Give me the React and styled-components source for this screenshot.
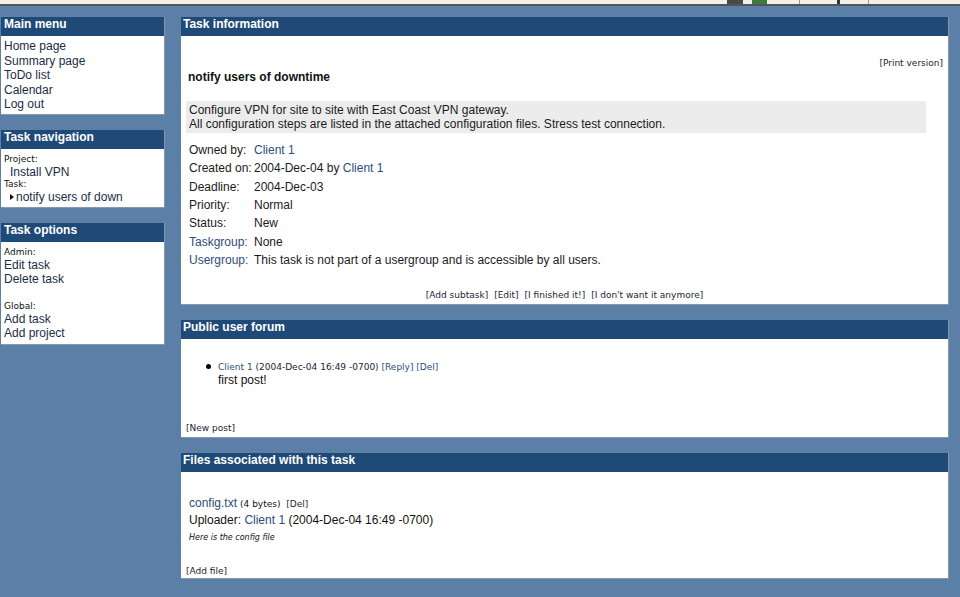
import React from 'react';
import styled, { createGlobalStyle } from 'styled-components';

const Global = createGlobalStyle`
  html, body { margin: 0; padding: 0; background: #5c7fa8; }
  body { font-family: "Liberation Sans", Arial, sans-serif; font-size: 12px; color: #1b1b1b; }
  a { text-decoration: none; color: inherit; }
`;

const Page = styled.div`
  min-height: 597px;
  background: #5c7fa8;
`;

const Chrome = styled.div`
  height: 4px;
  background: #f2efe6;
  border-bottom: 2px solid #50565c;
  display: flex;
  align-items: stretch;
  padding-left: 727px;
`;

const ChromeBit = styled.span`
  width: ${p => p.$w}px;
  margin-right: ${p => p.$gap}px;
  background: ${p => p.$c};
`;

const Layout = styled.div`
  display: flex;
  align-items: flex-start;
  gap: 16px;
  padding: 11px 11px 17px 1px;
`;

const Column = styled.div`
  width: ${p => p.$w}px;
  display: flex;
  flex-direction: column;
  gap: ${p => p.$gap}px;
`;

const Panel = styled.section`
  background: #fff;
  border-bottom: 1px solid #8798ae;
  border-right: 1px solid #8798ae;
`;

const PanelHead = styled.h2`
  margin: 0;
  height: 19px;
  line-height: 19px;
  background: #1f4a77;
  color: #fff;
  font: bold 12px "Liberation Sans", Arial, sans-serif;
  padding-left: ${p => p.$pl || 3}px;
`;

const SideBody = styled.div`
  padding: ${p => p.$pt}px 3px ${p => p.$pb}px 3px;
  display: flex;
  flex-direction: column;
`;

const MenuLink = styled.a`
  display: block;
  line-height: ${p => p.$lh || 14}px;
  font-size: 12px;
  color: #1c2c46;
  padding-left: ${p => p.$indent || 0}px;
`;

const SmallLabel = styled.div`
  font: 9px "DejaVu Sans", Verdana, sans-serif;
  line-height: 11px;
  color: #111;
`;

const Spacer = styled.div`
  height: ${p => p.$h}px;
`;

const TaskCurrent = styled.div`
  display: flex;
  align-items: center;
  gap: 2px;
  padding-left: 6px;
  line-height: 14px;
  color: #1c2c46;
`;

const Arrow = () => (
  <svg width="4" height="6" viewBox="0 0 4 6"><path d="M0 0 L4 3 L0 6 Z" fill="#111" /></svg>
);

const MainBody = styled.div`
  padding: 0 5px ${p => p.$pb || 3}px 5px;
  display: flex;
  flex-direction: column;
`;

const Small = styled.span`
  font: 9px "DejaVu Sans", Verdana, sans-serif;
  color: ${p => p.$c || '#1b2436'};
`;

const PrintRow = styled.div`
  margin-top: 20px;
  line-height: 12px;
  text-align: right;
`;

const Title = styled.h1`
  margin: 2px 0 0 2px;
  font: bold 12px "Liberation Sans", Arial, sans-serif;
  line-height: 15px;
  color: #111;
`;

const Description = styled.div`
  margin: 16px 17px 0 0;
  padding: 2px 3px;
  background: #ececec;
  line-height: 14px;
  color: #1b1b1b;
`;

const InfoGrid = styled.div`
  margin-top: 8px;
  padding-left: 3px;
  display: grid;
  grid-template-columns: 65px 1fr;
  grid-auto-rows: 18.3px;
  align-items: center;
`;

const Label = styled.span`
  color: ${p => (p.$link ? '#2d4d7c' : '#1b1b1b')};
`;

const Value = styled.span`
  color: #1b1b1b;
`;

const Link = styled.a`
  color: #2d4d7c;
`;

const Actions = styled.div`
  margin-top: 21px;
  line-height: 12px;
  display: flex;
  justify-content: center;
  gap: 6px;
`;

const Post = styled.div`
  margin-top: 21px;
  padding-left: 20px;
  display: flex;
  gap: 7px;
`;

const Bullet = styled.span`
  width: 5px;
  height: 5px;
  border-radius: 50%;
  background: #000;
  margin-top: 4px;
  flex: none;
`;

const PostBody = styled.div`
  display: flex;
  flex-direction: column;
`;

const PostMeta = styled.div`
  line-height: 12px;
`;

const PostText = styled.div`
  margin-top: 1px;
  line-height: 15px;
  color: #111;
`;

const BottomLink = styled.div`
  margin-top: ${p => p.$mt}px;
  line-height: 12px;
`;

const FileLine = styled.div`
  margin-top: 23px;
  padding-left: 3px;
  line-height: 16px;
  display: flex;
  align-items: baseline;
  gap: 3px;
`;

const UploadLine = styled.div`
  padding-left: 3px;
  line-height: 18px;
  color: #111;
`;

const Comment = styled.div`
  padding-left: 3px;
  font: italic 8px "DejaVu Sans", Verdana, sans-serif;
  line-height: 18px;
  color: #111;
`;

export default function App() {
  return (
    <Page>
      <Global />
      <Chrome>
        <ChromeBit $w={16} $gap={9} $c="#4a4a44" />
        <ChromeBit $w={15} $gap={32} $c="#3f7a3a" />
        <ChromeBit $w={1} $gap={37} $c="#999" />
        <ChromeBit $w={3} $gap={28} $c="#334" />
        <ChromeBit $w={1} $gap={0} $c="#999" />
      </Chrome>
      <Layout>
        <Column $w={164} $gap={15}>
          <Panel>
            <PanelHead>Main menu</PanelHead>
            <SideBody $pt={3} $pb={2}>
              <MenuLink $lh={14.5}>Home page</MenuLink>
              <MenuLink $lh={14.5}>Summary page</MenuLink>
              <MenuLink $lh={14.5}>ToDo list</MenuLink>
              <MenuLink $lh={14.5}>Calendar</MenuLink>
              <MenuLink $lh={14.5}>Log out</MenuLink>
            </SideBody>
          </Panel>
          <Panel>
            <PanelHead>Task navigation</PanelHead>
            <SideBody $pt={5} $pb={3}>
              <SmallLabel>Project:</SmallLabel>
              <MenuLink $indent={6}>Install VPN</MenuLink>
              <SmallLabel>Task:</SmallLabel>
              <TaskCurrent><Arrow />notify users of down</TaskCurrent>
            </SideBody>
          </Panel>
          <Panel>
            <PanelHead>Task options</PanelHead>
            <SideBody $pt={5} $pb={4}>
              <SmallLabel>Admin:</SmallLabel>
              <MenuLink>Edit task</MenuLink>
              <MenuLink>Delete task</MenuLink>
              <Spacer $h={15} />
              <SmallLabel>Global:</SmallLabel>
              <MenuLink>Add task</MenuLink>
              <MenuLink>Add project</MenuLink>
            </SideBody>
          </Panel>
        </Column>
        <Column $w={768} $gap={15}>
          <Panel>
            <PanelHead $pl={2}>Task information</PanelHead>
            <MainBody $pb={4}>
              <PrintRow><Small>[Print version]</Small></PrintRow>
              <Title>notify users of downtime</Title>
              <Description>
                Configure VPN for site to site with East Coast VPN gateway.<br />
                All configuration steps are listed in the attached configuration files. Stress test connection.
              </Description>
              <InfoGrid>
                <Label>Owned by:</Label><Value><Link>Client 1</Link></Value>
                <Label>Created on:</Label><Value>2004-Dec-04 by <Link>Client 1</Link></Value>
                <Label>Deadline:</Label><Value>2004-Dec-03</Value>
                <Label>Priority:</Label><Value>Normal</Value>
                <Label>Status:</Label><Value>New</Value>
                <Label $link>Taskgroup:</Label><Value>None</Value>
                <Label $link>Usergroup:</Label><Value>This task is not part of a usergroup and is accessible by all users.</Value>
              </InfoGrid>
              <Actions>
                <Small>[Add subtask]</Small>
                <Small>[Edit]</Small>
                <Small>[I finished it!]</Small>
                <Small>[I don't want it anymore]</Small>
              </Actions>
            </MainBody>
          </Panel>
          <Panel>
            <PanelHead $pl={2}>Public user forum</PanelHead>
            <MainBody $pb={4}>
              <Post>
                <Bullet />
                <PostBody>
                  <PostMeta>
                    <Small $c="#2d4d7c">Client 1</Small>
                    <Small> (2004-Dec-04 16:49 -0700) </Small>
                    <Small $c="#2d4d7c">[Reply]</Small>
                    <Small> </Small>
                    <Small $c="#2d4d7c">[Del]</Small>
                  </PostMeta>
                  <PostText>first post!</PostText>
                </PostBody>
              </Post>
              <BottomLink $mt={33}><Small>[New post]</Small></BottomLink>
            </MainBody>
          </Panel>
          <Panel>
            <PanelHead $pl={2}>Files associated with this task</PanelHead>
            <MainBody $pb={2}>
              <FileLine>
                <Link>config.txt</Link>
                <Small $c="#111">(4 bytes)</Small>
                <Small>&nbsp;[Del]</Small>
              </FileLine>
              <UploadLine>Uploader: <Link>Client 1</Link> (2004-Dec-04 16:49 -0700)</UploadLine>
              <Comment>Here is the config file</Comment>
              <BottomLink $mt={17}><Small>[Add file]</Small></BottomLink>
            </MainBody>
          </Panel>
        </Column>
      </Layout>
    </Page>
  );
}
